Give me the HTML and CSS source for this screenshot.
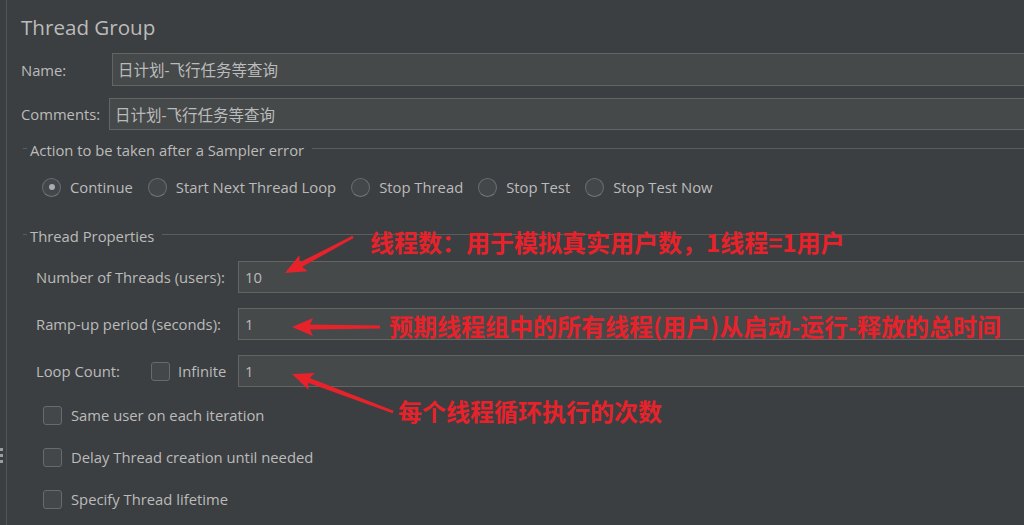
FILE: index.html
```html
<!DOCTYPE html>
<html lang="en">
<head>
    <meta charset="UTF-8">
    <title>Thread Group</title>
    <link rel="stylesheet" href="styles.css">
</head>
<body>

<div class="window">
    <div class="gutter">
        <span class="grip"></span>
    </div>

    <div class="panel">
        <h1 class="title">Thread Group</h1>

        <div class="field-row name-row">
            <label class="field-label name-label">Name:</label>
            <div class="text-input">日计划-飞行任务等查询</div>
        </div>
        <div class="field-row comments-row">
            <label class="field-label comments-label">Comments:</label>
            <div class="text-input">日计划-飞行任务等查询</div>
        </div>

        <!-- Action after sampler error -->
        <div class="group-title first-group">
            <span class="group-dash"></span>
            <span class="group-text">Action to be taken after a Sampler error</span>
            <span class="group-line"></span>
        </div>
        <div class="radio-row">
            <div class="radio-item"><span class="radio checked"></span>Continue</div>
            <div class="radio-item"><span class="radio"></span>Start Next Thread Loop</div>
            <div class="radio-item"><span class="radio"></span>Stop Thread</div>
            <div class="radio-item"><span class="radio"></span>Stop Test</div>
            <div class="radio-item"><span class="radio"></span>Stop Test Now</div>
        </div>

        <!-- Thread properties -->
        <div class="group-title second-group">
            <span class="group-dash"></span>
            <span class="group-text">Thread Properties</span>
            <span class="group-line"></span>
        </div>
        <div class="props">
            <div class="prop-row">
                <div class="prop-label">Number of Threads (users):</div>
                <div class="text-input">10</div>
            </div>
            <div class="prop-row">
                <div class="prop-label">Ramp-up period (seconds):</div>
                <div class="text-input">1</div>
            </div>
            <div class="prop-row">
                <div class="prop-label loop-label">
                    <span class="loop-text">Loop Count:</span>
                    <span class="checkbox"></span>
                    <span>Infinite</span>
                </div>
                <div class="text-input">1</div>
            </div>
        </div>

        <div class="check-list">
            <div class="check-row"><span class="checkbox"></span>Same user on each iteration</div>
            <div class="check-row"><span class="checkbox"></span>Delay Thread creation until needed</div>
            <div class="check-row"><span class="checkbox"></span>Specify Thread lifetime</div>
        </div>
    </div>
</div>

<!-- red notes drawn over the screenshot -->
<div class="annotations">
    <svg class="arrows" width="1024" height="525" viewBox="0 0 1024 525">
        <g fill="#e8222b">
            <polygon transform="translate(285 273) rotate(-27.9)" points="0,0 21,-9 18,-2.5 77,-1.3 77,1.3 18,2.5 21,9"/>
            <polygon transform="translate(292 327)" points="0,0 21,-9 18,-2.5 88,-1.4 88,1.4 18,2.5 21,9"/>
            <polygon transform="translate(292 374) rotate(20.6)" points="0,0 21,-9 18,-2.5 108,-1.4 108,1.4 18,2.5 21,9"/>
        </g>
    </svg>
    <span class="note note-threads">线程数：用于模拟真实用户数，1线程=1用户</span>
    <span class="note note-rampup">预期线程组中的所有线程(用户)从启动-运行-释放的总时间</span>
    <span class="note note-loop">每个线程循环执行的次数</span>
</div>

</body>
</html>
```

FILE: styles.css
```css
body {
    margin: 0;
    width: 1024px;
    height: 525px;
    overflow: hidden;
    position: relative;
    background-color: #3c3f41;
    color: #bbbbbb;
    font-family: 'Open Sans', 'Noto Sans CJK SC', sans-serif;
    font-size: 14.8px;
}

.window {
    display: flex;
    height: 525px;
}

/* left splitter */
.gutter {
    width: 7px;
    border-right: 1px solid #515557;
    padding-top: 448px;
    box-sizing: border-box;
    flex: none;
}

.grip {
    display: block;
    width: 3px;
    height: 15px;
    background: repeating-linear-gradient(#9a9da0 0 3px, transparent 3px 6px);
}

.panel {
    flex: none;
    width: 1060px;
    padding-left: 14px;
    box-sizing: border-box;
}

.title {
    margin: 0;
    padding-top: 13px;
    margin-bottom: 12px;
    line-height: 28px;
    font-size: 20.6px;
    font-weight: normal;
}

.field-row {
    display: flex;
    align-items: center;
}

.name-row {
    height: 33px;
    margin-bottom: 12px;
}

.comments-row {
    height: 32px;
}

.name-label {
    width: 91px;
    flex: none;
}

.comments-label {
    width: 88px;
    flex: none;
}

.text-input {
    flex: 1;
    height: 100%;
    box-sizing: border-box;
    background-color: #45494a;
    border: 1px solid #646464;
    border-right: none;
    padding-left: 6px;
    display: flex;
    align-items: center;
}

.field-row .text-input {
    font-size: 15.5px;
    padding-left: 5px;
}

/* titled separators */
.group-title {
    display: flex;
    height: 20px;
    line-height: 20px;
}

.first-group {
    margin-top: 10px;
}

.second-group {
    margin-top: 29px;
}

.group-dash {
    width: 4px;
    height: 1px;
    margin: 8px 3px 0 2px;
    background-color: #5a5d5f;
}

.group-line {
    flex: 1;
    height: 1px;
    margin: 8px 0 0 8px;
    background-color: #5a5d5f;
}

.radio-row {
    display: flex;
    gap: 15px;
    height: 20px;
    margin: 17px 0 0 21px;
}

.radio-item {
    display: flex;
    align-items: center;
    gap: 9px;
}

.radio {
    width: 19px;
    height: 19px;
    box-sizing: border-box;
    border-radius: 50%;
    border: 1px solid #6a6d6f;
    border-bottom-color: #777a7c;
    background-color: #43474a;
    display: flex;
    align-items: center;
    justify-content: center;
}

.radio.checked::after {
    content: '';
    width: 6px;
    height: 6px;
    border-radius: 50%;
    background-color: #a7adb2;
}

.props {
    margin: 15px 0 0 15px;
    display: flex;
    flex-direction: column;
    gap: 15px;
}

.prop-row {
    display: flex;
    align-items: center;
    height: 32px;
}

.prop-label {
    width: 202px;
    flex: none;
}

.loop-label {
    display: flex;
    align-items: center;
}

.loop-text {
    width: 115px;
}

.loop-label .checkbox {
    margin-right: 8px;
}

.checkbox {
    width: 19px;
    height: 19px;
    box-sizing: border-box;
    border: 1px solid #686b6d;
    border-radius: 3px;
    background-color: #43474a;
    flex: none;
}

.check-list {
    margin: 18px 0 0 22px;
    display: flex;
    flex-direction: column;
    gap: 22px;
}

.check-row {
    display: flex;
    align-items: center;
    gap: 9px;
    height: 20px;
}

/* screenshot annotations */
.annotations {
    position: absolute;
    inset: 0;
    pointer-events: none;
}

.arrows {
    position: absolute;
    left: 0;
    top: 0;
}

.note {
    position: absolute;
    color: #e8222b;
    font-family: 'Noto Sans CJK SC', sans-serif;
    font-weight: bold;
    font-size: 24px;
    line-height: 24px;
    white-space: nowrap;
}

.note-threads {
    left: 370px;
    top: 230px;
}

.note-rampup {
    left: 389px;
    top: 314px;
}

.note-loop {
    left: 398px;
    top: 399px;
}
```
